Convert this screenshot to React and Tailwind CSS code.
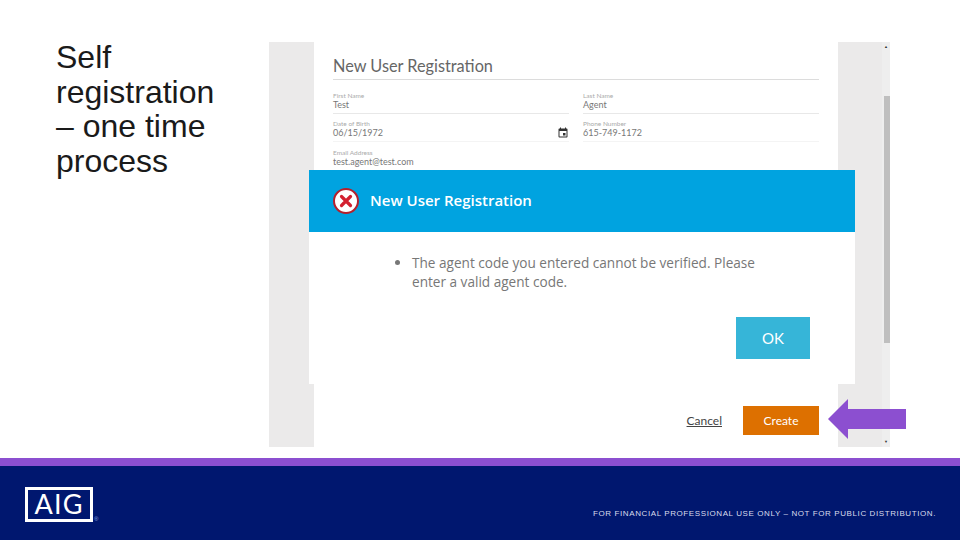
import { MdEvent } from "react-icons/md";

const FIELD_ROWS = [
  { label: "First Name", value: "Test", line: "border-[#e8e8e8]" },
  { label: "Last Name", value: "Agent", line: "border-[#e8e8e8]" },
  { label: "Date of Birth", value: "06/15/1972", icon: true, line: "border-[#f4f4f4]" },
  { label: "Phone Number", value: "615-749-1172", line: "border-[#f4f4f4]" },
];

function Field({ label, value, icon, line }) {
  return (
    <div className={`h-[28px] border-b relative pt-[6px] ${line}`}>
      <div className="text-[6.5px] leading-[7px] text-[#aaa]">{label}</div>
      <div className="text-[9px] leading-[11px] text-[#777]">{value}</div>
      {icon && <MdEvent className="absolute right-0 top-[13px] text-[#333] w-[12px] h-[12px]" />}
    </div>
  );
}

function Registration() {
  return (
    <div className="relative h-[405px] w-[621px] flex bg-[#ebeaea] mt-[42px] font-['Lato',sans-serif]">
      <div className="w-[45px]" />
      <div className="w-[524px] bg-white pl-[19px] pr-[19px] pt-[14px] flex flex-col">
        <h2 className="text-[16.3px] leading-[20px] text-[#666] border-b border-[#dcdcdc] h-[24px]">
          New User Registration
        </h2>
        <div className="grid grid-cols-[236px_236px] gap-x-[14px] mt-[6px]">
          {FIELD_ROWS.map((f) => (
            <Field key={f.label} {...f} />
          ))}
        </div>
        <div className="mt-[7px]">
          <div className="text-[6.5px] leading-[7px] text-[#aaa]">Email Address</div>
          <div className="text-[9px] leading-[11px] text-[#777]">test.agent@test.com</div>
        </div>
        <div className="mt-auto mb-[12px] flex items-center justify-end">
          <span className="text-[12px] text-[#444] underline mr-[21px]">Cancel</span>
          <span className="w-[76px] h-[29px] flex items-center justify-center bg-[#dd7000] text-white text-[12px]">
            Create
          </span>
        </div>
      </div>
      <div className="flex-1 flex justify-end">
        <div className="w-[8px] bg-[#eeeeee] flex flex-col items-center relative">
          <span className="text-[4px] leading-[8px] text-[#333] mt-[1px]">▲</span>
          <div className="w-[6px] h-[247px] bg-[#bfbfbf] mt-[45px] ml-[1px]" />
          <span className="text-[4px] leading-[8px] text-[#333] mt-auto mb-[1px]">▼</span>
        </div>
      </div>

      {/* error dialog sits over the form */}
      <div className="absolute left-[40px] top-[128px] w-[546px] h-[214px] bg-white font-['Open_Sans',sans-serif]">
        <div className="h-[62px] bg-[#00a3e0] flex items-center pl-[24px]">
          <svg width="26" height="26" viewBox="0 0 26 26">
            <circle cx="13" cy="13" r="12" fill="#fff" stroke="#b5202c" strokeWidth="2" />
            <path d="M8.5 8.5l9 9M17.500 8.500l-9 9" stroke="#d3202f" strokeWidth="3.200" strokeLinecap="round" />
          </svg>
          <span className="ml-[11px] text-white font-semibold text-[15px] -mt-[1px]">New User Registration</span>
        </div>
        <ul className="list-disc pl-[103px] pr-[95px] pt-[21px] text-[13.6px] leading-[19px] text-[#777]">
          <li>The agent code you entered cannot be verified. Please enter a valid agent code.</li>
        </ul>
        <span className="absolute left-[427px] top-[147px] w-[74px] h-[42px] bg-[#36b5d8] text-white text-[15px] flex items-center justify-center font-['Lato',sans-serif]">
          OK
        </span>
      </div>

      {/* arrow pointing at the Create button */}
      <svg className="absolute left-[559px] top-[357px]" width="78" height="40" viewBox="0 0 78 40">
        <path d="M0 20L20 0V10H78V30H20V40Z" fill="#8c4fd0" />
      </svg>
    </div>
  );
}

export default function App() {
  return (
    <div className="w-[960px] h-[540px] bg-white flex flex-col overflow-hidden font-['Liberation_Sans',sans-serif]">
      <main className="flex-1 flex min-h-0">
        <div className="w-[269px] pl-[56px] pt-[40px] pr-[40px]">
          <h1 className="text-[32px] leading-[34.7px] text-[#1a1a1a]">Self registration – one time process</h1>
        </div>
        <Registration />
      </main>
      <div className="h-[8px] bg-[#8c4fd0]" />
      <footer className="h-[74px] bg-[#00176f] flex items-start pl-[25px] relative">
        <div className="mt-[21px] w-[68px] h-[35px] border-[3px] border-white flex items-center justify-center text-white text-[27px] tracking-[1.2px] font-['Lato',sans-serif]">
          AIG
        </div>
        <span className="mt-[50px] ml-[1px] text-[6px] leading-[6px] text-[#8fa3e0]">®</span>
        <p className="absolute left-[593px] top-[43px] text-[8px] leading-[10px] tracking-[0.6px] text-[#d8dcec] whitespace-nowrap">
          FOR FINANCIAL PROFESSIONAL USE ONLY – NOT FOR PUBLIC DISTRIBUTION.
        </p>
      </footer>
    </div>
  );
}
